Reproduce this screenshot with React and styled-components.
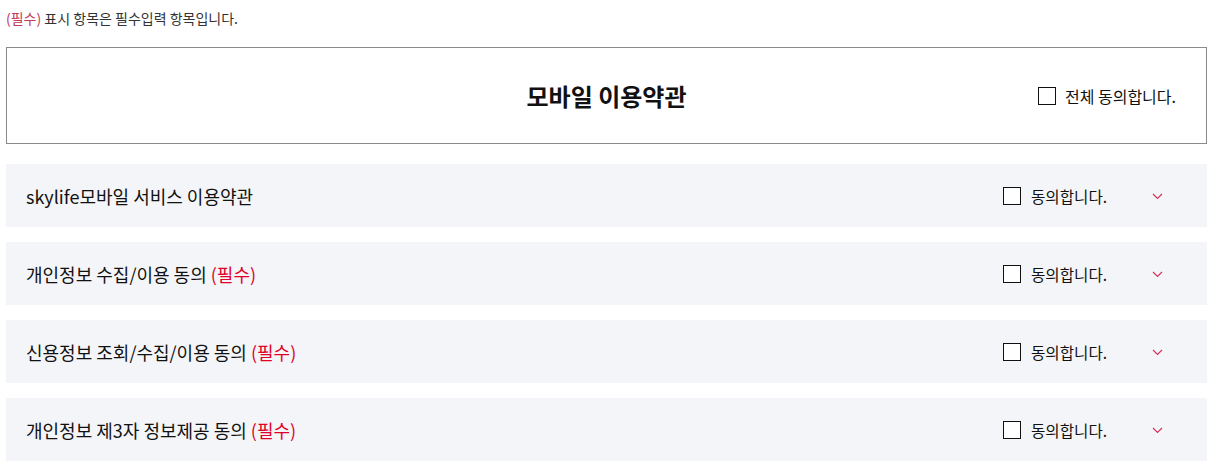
import React from "react";
import styled, { createGlobalStyle } from "styled-components";

const Global = createGlobalStyle`
  html, body { margin: 0; padding: 0; background: #fff; }
  body { font-family: "Noto Sans CJK KR", "Noto Sans", sans-serif; color: #111; }
  * { box-sizing: border-box; }
`;

const Page = styled.div`
  padding: 6px 5px 0 6px;
  display: flex;
  flex-direction: column;
`;

const Notice = styled.p`
  margin: 0;
  font-size: 14px;
  line-height: 24px;
  color: #333;
`;

const Req = styled.span`
  color: ${(p) => (p.$strong ? "#e0002a" : "#c23a5c")};
`;

const AllBox = styled.div`
  margin-top: 17px;
  height: 97px;
  border: 1px solid #8a8a8a;
  position: relative;
  display: flex;
  align-items: center;
  justify-content: center;
`;

const Title = styled.h2`
  margin: 0;
  font-size: 24px;
  font-weight: 700;
  color: #111;
`;

const AllCheck = styled.label`
  position: absolute;
  right: 30px;
  top: 50%;
  transform: translateY(-50%);
  display: flex;
  align-items: center;
  gap: 9px;
  font-size: 16px;
  color: #111;
`;

const Box = styled.span`
  width: 18px;
  height: 18px;
  border: 1px solid #111;
  background: #fff;
  display: inline-block;
  flex: none;
`;

const List = styled.div`
  margin-top: 20px;
  display: flex;
  flex-direction: column;
  gap: 15px;
`;

const Row = styled.div`
  height: 63px;
  background: #f4f5f8;
  display: flex;
  align-items: center;
  padding: 0 44px 0 20px;
`;

const RowTitle = styled.div`
  flex: 1;
  font-size: 18px;
  color: #111;
`;

const Agree = styled.label`
  display: flex;
  align-items: center;
  gap: 10px;
  font-size: 15.6px;
  color: #111;
  width: 149px;
`;

const Chevron = styled.span`
  display: flex;
  align-items: center;
  margin-top: 1px;
`;

const items = [
  { t: "skylife모바일 서비스 이용약관", req: false },
  { t: "개인정보 수집/이용 동의", req: true },
  { t: "신용정보 조회/수집/이용 동의", req: true },
  { t: "개인정보 제3자 정보제공 동의", req: true },
];

export default function App() {
  return (
    <>
      <Global />
      <Page>
        <Notice>
          <Req>(필수)</Req> 표시 항목은 필수입력 항목입니다.
        </Notice>
        <AllBox>
          <Title>모바일 이용약관</Title>
          <AllCheck>
            <Box />
            전체 동의합니다.
          </AllCheck>
        </AllBox>
        <List>
          {items.map((it) => (
            <Row key={it.t}>
              <RowTitle>
                {it.t}
                {it.req && (
                  <>
                    {" "}
                    <Req $strong>(필수)</Req>
                  </>
                )}
              </RowTitle>
              <Agree>
                <Box />
                동의합니다.
              </Agree>
              <Chevron>
                <svg width="11" height="7" viewBox="0 0 11 7" fill="none">
                  <path d="M1 1 L5.5 5.5 L10 1" stroke="#d6325a" strokeWidth="1.2" />
                </svg>
              </Chevron>
            </Row>
          ))}
        </List>
      </Page>
    </>
  );
}
